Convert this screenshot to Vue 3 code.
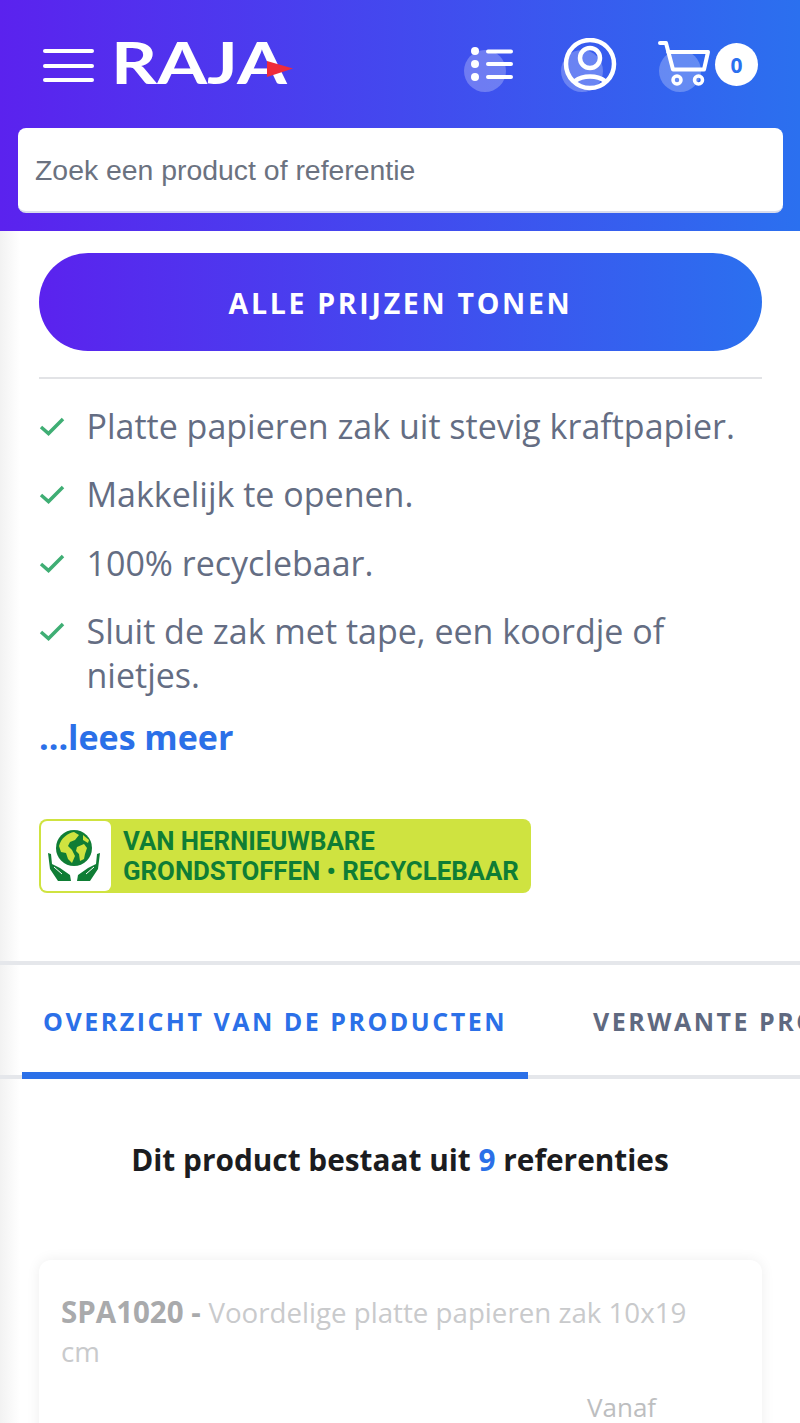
<template>
  <div class="page">
    <header class="header">
      <div class="top-row">
        <div class="burger"><span></span><span></span><span></span></div>
        <div class="logo">
          <span class="logo-word">RAJA</span>
          <svg class="flag" viewBox="0 0 26 18"><path d="M0 1 L26 8.500 L0 17 Z" fill="#ee2b3b" /></svg>
        </div>
        <div class="actions">
          <svg class="ico ico-list" viewBox="460 40 56 55">
            <circle cx="484" cy="71" r="21" fill="#fff" fill-opacity=".25" />
            <circle cx="474" cy="51" r="4" fill="#fff" />
            <circle cx="474" cy="64" r="4" fill="#fff" />
            <circle cx="474" cy="77" r="4" fill="#fff" />
            <path d="M487 51.500H510M487 64H510M487 77H510" stroke="#fff" stroke-width="4" stroke-linecap="round" />
          </svg>
          <svg class="ico ico-user" viewBox="558 38 60 57">
            <circle cx="581" cy="71" r="21" fill="#fff" fill-opacity=".25" />
            <circle cx="589" cy="64" r="24" fill="none" stroke="#fff" stroke-width="4.500" />
            <circle cx="589" cy="58" r="10" fill="none" stroke="#fff" stroke-width="4.500" />
            <path d="M574 81C582 75 596 75 604 81" fill="none" stroke="#fff" stroke-width="4.500" />
          </svg>
          <svg class="ico ico-cart" viewBox="655 38 56 57">
            <circle cx="679" cy="71" r="21" fill="#fff" fill-opacity=".25" />
            <path d="M659 43H665L672 69.500H703L707 52H667" fill="none" stroke="#fff" stroke-width="4" stroke-linecap="round" stroke-linejoin="round" />
            <circle cx="676" cy="80" r="4" fill="none" stroke="#fff" stroke-width="3.500" />
            <circle cx="697.500" cy="80" r="4" fill="none" stroke="#fff" stroke-width="3.500" />
          </svg>
          <span class="badge">0</span>
        </div>
      </div>
      <div class="search">Zoek een product of referentie</div>
    </header>

    <main class="content">
      <section class="intro">
        <button class="cta">ALLE PRIJZEN TONEN</button>
        <hr class="rule" />
        <ul class="features">
          <li v-for="f in features" :key="f">
            <svg class="check" viewBox="0 0 26 20"><path d="M2 11L9.500 17.500L24 3" fill="none" stroke="#3fae74" stroke-width="3.500" /></svg>
            <span>{{ f }}</span>
          </li>
        </ul>
        <a class="more">...lees meer</a>
        <div class="eco">
          <div class="eco-icon">
            <svg viewBox="0 0 70 70" width="70" height="70">
              <circle cx="33" cy="27" r="18" fill="#0f7d35" />
              <path d="M18 25C20 17 27 12 33 11L38 14L34 19L29 21L27 25L31 29L34 35L31 42L27 38L25 32L20 31Z" fill="#cfe340" />
              <path d="M36 26L43 23L46 27L44 33L43 38L39 40L38 33L35 30Z" fill="#cfe340" />
              <path d="M42 14L48 19L47 22L42 19Z" fill="#cfe340" />
              <path d="M7 32L10 33L11 43L19 47L29 54L30 60L17 60L9 48Z" fill="#0f7d35" />
              <path d="M59 32L56 33L55 43L47 47L37 54L36 60L49 60L57 48Z" fill="#0f7d35" />
              <path d="M13 46L21 53M53 46L45 53" stroke="#fff" stroke-width="1" />
            </svg>
          </div>
          <div class="eco-text">VAN HERNIEUWBARE<br />GRONDSTOFFEN • RECYCLEBAAR</div>
        </div>
      </section>

      <nav class="tabs">
        <div class="tab active">OVERZICHT VAN DE PRODUCTEN</div>
        <div class="tab">VERWANTE PRODUCTEN</div>
      </nav>

      <h2 class="refs">Dit product bestaat uit <span>9</span> referenties</h2>

      <article class="card">
        <p class="card-title"><b>SPA1020 - </b>Voordelige platte papieren zak 10x19 cm</p>
        <div class="from">Vanaf</div>
      </article>
    </main>
  </div>
</template>

<script setup>
const features = [
  'Platte papieren zak uit stevig kraftpapier.',
  'Makkelijk te openen.',
  '100% recyclebaar.',
  'Sluit de zak met tape, een koordje of nietjes.'
]
</script>

<style>
html, body { margin: 0; background: #fff; overflow: hidden; }
</style>

<style scoped>
.page { width: 800px; height: 1423px; overflow: hidden; font-family: "Open Sans", sans-serif; }
.header { height: 231px; box-sizing: border-box; background: linear-gradient(90deg, #5b22ee, #2b70ef); padding: 38px 17px 0 18px; }
.top-row { display: flex; height: 57px; margin-bottom: 33px; }
.burger { display: flex; flex-direction: column; gap: 10.500px; margin: 11px 0 0 25px; width: 51px; }
.burger span { display: block; height: 4px; border-radius: 2px; background: #fff; }
.logo { position: relative; margin-left: 17px; width: 179px; height: 57px; color: #fff; font: 700 57px/48px Lato, sans-serif; white-space: nowrap; }
.logo-word { display: inline-block; transform: scaleX(1.26); transform-origin: left center; }
.flag { position: absolute; left: 156px; top: 22px; width: 26px; height: 18px; }
.actions { display: flex; margin-left: auto; margin-right: 25px; }
.ico { display: block; flex: none; }
.ico-list { width: 56px; height: 55px; margin-top: 2px; }
.ico-user { width: 60px; height: 57px; margin-left: 42px; }
.ico-cart { width: 56px; height: 57px; margin-left: 37px; }
.badge { width: 43px; height: 43px; margin: 5px 0 0 3px; border-radius: 50%; background: #fff; color: #2b70ef; font-size: 21px; font-weight: 700; display: flex; align-items: center; justify-content: center; }
.search { height: 85px; box-sizing: border-box; background: #fff; border-radius: 8px; border-bottom: 2px solid #d9dcec; padding: 2px 0 0 17px; display: flex; align-items: center; color: #6b7280; font: 28.400px "Liberation Sans", sans-serif; }

.content { height: 1192px; background: linear-gradient(90deg, #f2f2f2, #fff 20px); }
.intro { padding: 22px 38px 0 39px; height: 730px; box-sizing: border-box; }
.cta { display: block; width: 100%; height: 98px; border: 0; border-radius: 49px; padding: 2px 0 0; background: linear-gradient(90deg, #5b22ee, #2b70ef); color: #fff; font: 700 28.500px "Open Sans", sans-serif; letter-spacing: 2.700px; }
.rule { border: 0; height: 2px; background: #e2e3e6; margin: 26px 0 0; }
.features { list-style: none; margin: 25px 0 0; padding: 0; }
.features li { display: flex; margin-bottom: 24.300px; color: #646d83; font-size: 34px; line-height: 44px; }
.features li:last-child { margin-bottom: 0; }
.check { flex: none; width: 26px; height: 20px; margin: 12px 21.500px 0 0; }
.more { display: block; margin-top: 18px; color: #2b70e8; font-size: 34px; line-height: 44px; font-weight: 700; }
.eco { display: flex; align-items: center; width: 492px; height: 74px; margin-top: 60px; box-sizing: border-box; border-radius: 8px; background: #cfe340; padding: 2px; }
.eco-icon { width: 70px; height: 70px; background: #fff; border-radius: 6px; flex: none; }
.eco-text { margin-left: 12px; color: #0f7d35; font: 700 25.800px/30px Roboto, sans-serif; white-space: nowrap; }

.tabs { display: flex; height: 118px; box-sizing: border-box; border-top: 4px solid #e5e7eb; overflow: hidden; box-shadow: inset 0 -4px 0 #e5e7eb; }
.tab { flex: none; height: 114px; box-sizing: border-box; color: #5f6980; font-size: 25px; font-weight: 700; letter-spacing: 2.500px; line-height: 112px; white-space: nowrap; }
.tab.active { margin-left: 22px; width: 506px; padding-left: 21px; color: #2b70e8; border-bottom: 7px solid #2b70e8; }
.tab:not(.active) { margin-left: 65px; }

.refs { margin: 59px 0 0; text-align: center; color: #1b1c20; font-size: 29.800px; line-height: 44px; font-weight: 700; }
.refs span { color: #2b70e8; }

.card { margin: 78px 38px 0 39px; height: 300px; padding: 33px 22px 0; box-sizing: border-box; border-radius: 12px; background: #fff; box-shadow: 0 0 14px rgba(0, 0, 0, .07); }
.card-title { margin: 0; width: 640px; color: #c9cacc; font-size: 27.700px; line-height: 39px; }
.card-title b { color: #a9aaac; font-size: 29.500px; line-height: 30px; }
.from { margin: 21px 0 0 526px; color: #bdbec0; font-size: 26px; line-height: 30px; }
</style>
